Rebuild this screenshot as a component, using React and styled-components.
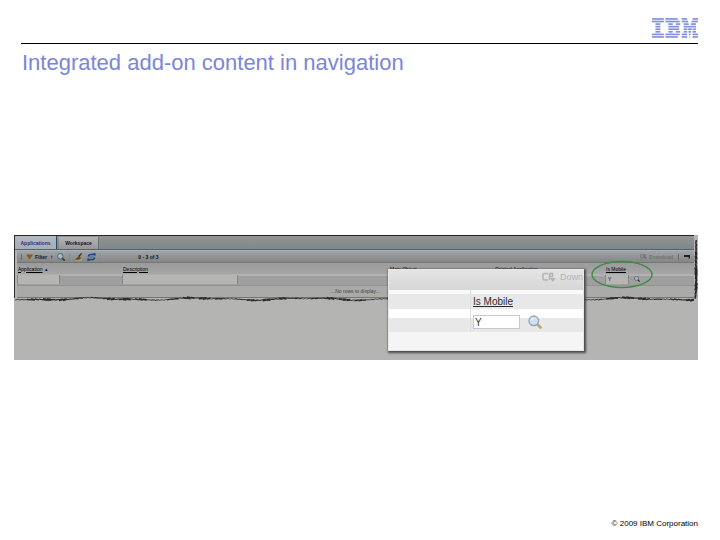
import styled, { createGlobalStyle, css } from "styled-components";

const theme = {
  primColor: "#7b86d6",
  ink: "#141414",
  paper: "#b4b4b3",
};

const GlobalStyle = createGlobalStyle`
  * {
    box-sizing: border-box;
  }
  body {
    margin: 0;
    background-color: #fff;
    font-family: "Liberation Sans", Arial, sans-serif;
  }
  button, input {
    font-family: inherit;
    margin: 0;
    border-radius: 0;
  }
`;

const Slide = styled.main`
  min-height: 100vh;
  display: flex;
  flex-direction: column;
  padding: 18px 22px 10px 14px;
`;

const Header = styled.header`
  margin-left: 7px;
  .brand {
    display: flex;
    justify-content: flex-end;
    height: 26px;
    padding-bottom: 6px;
    border-bottom: solid 1px #000;
  }
  h1 {
    margin: 6px 0 0 1px;
    font-size: 22px;
    line-height: 25px;
    font-weight: 400;
    color: ${theme.primColor};
  }
`;

const Figure = styled.section`
  position: relative;
  margin-top: 160px;
  padding-bottom: 62px;
  background-color: ${theme.paper};
`;

const Screen = styled.div`
  position: relative;
  border-top: solid 1px #242424;
  border-left: solid 1px #303030;
  margin-right: 4px;
`;

const TabBar = styled.nav`
  display: flex;
  align-items: flex-end;
  gap: 2px;
  height: 14px;
  background: linear-gradient(#92958f, #7e878c);
  border-bottom: solid 1px #53616e;
`;

const Tab = styled.button`
  height: 12px;
  width: 40px;
  padding: 0;
  border: none;
  font-size: 5px;
  line-height: 10px;
  font-weight: 700;
  color: #141414;
  background: linear-gradient(#b4b4b4, #969696);
  border-right: solid 1px #6b7075;
  ${({ $active }) =>
    $active &&
    css`
      height: 13px;
      width: 42px;
      color: #1e327e;
      background: linear-gradient(#b3b8be, #a6adb6);
      border-right-color: #2f4a66;
    `}
`;

const Toolbar = styled.div`
  display: flex;
  align-items: center;
  gap: 4px;
  height: 13px;
  padding: 0 4px;
  margin-left: 2px;
  border-top: solid 1px #a9b0b6;
  border-bottom: solid 1px #777;
  background: linear-gradient(#a0a5a8, #858585);
  font-size: 5px;
  color: ${theme.ink};
  .pager {
    margin-left: 33px;
    font-weight: 700;
  }
  .right {
    margin-left: auto;
    display: flex;
    align-items: center;
    gap: 5px;
  }
`;

const Tool = styled.button`
  display: flex;
  align-items: center;
  gap: 2px;
  padding: 0;
  border: none;
  background-color: transparent;
  font-size: 5px;
  font-weight: 700;
  color: ${({ $muted }) => ($muted ? "#727272" : theme.ink)};
`;

const Separator = styled.span`
  width: 1px;
  height: 6px;
  background-color: ${({ $faint }) => ($faint ? "#8c8c8c" : "#6a6a6a")};
`;

const Grid = styled.table`
  width: calc(100% - 2px);
  margin-left: 2px;
  table-layout: fixed;
  border-collapse: collapse;
  font-size: 5px;
  color: ${theme.ink};
  th,
  td {
    padding: 0 1px;
    text-align: left;
    vertical-align: middle;
    line-height: 10px;
  }
  th {
    height: 11px;
    font-weight: 400;
    color: #000;
    background: linear-gradient(#9a9a9a, #a6a6a6);
    span {
      text-decoration: underline;
    }
  }
  .filters td {
    height: 11px;
    padding: 0;
    background: linear-gradient(#b1b1b1 0 2px, #9f9f9f 2px);
    border-bottom: solid 1px #929292;
    div {
      display: flex;
      align-items: center;
      gap: 5px;
    }
  }
  .empty td {
    height: 12px;
    text-align: center;
    color: #4b4238;
    background-color: #aaaaa9;
    border-bottom: solid 1px #77776f;
  }
`;

const FilterInput = styled.input`
  display: block;
  width: ${({ $width }) => $width};
  height: 9px;
  padding: 0 2px;
  border: none;
  border-left: solid 1px #858585;
  border-right: solid 1px #858585;
  background-color: #b5b6b3;
  font-size: 5px;
  color: #000;
`;

const TornBottom = styled.svg`
  display: block;
  position: absolute;
  left: 0;
  bottom: -4px;
  width: 100%;
  height: 6px;
`;

const TornRight = styled.svg`
  position: absolute;
  right: -4px;
  top: 4px;
  width: 5px;
  height: calc(100% - 3px);
`;

const Highlight = styled.svg`
  position: absolute;
  right: 45px;
  top: 25px;
  width: 63px;
  height: 29px;
`;

const Zoomed = styled.aside`
  position: absolute;
  left: 374px;
  top: 34px;
  width: 196px;
  border: solid 1px #e6e6e6;
  background-color: #f5f5f5;
  box-shadow: 1px 1px 2px 1px #4a4a4a;
  color: #3c3c3c;
  font-size: 10px;
  .strip {
    display: flex;
    justify-content: flex-end;
    align-items: center;
    gap: 4px;
    height: 20px;
    padding-bottom: 6px;
    background: linear-gradient(#e4e4e4, #d6d6d6);
    overflow: hidden;
    font-size: 9px;
    color: #b4b4b4;
  }
  .cells {
    display: grid;
    grid-template-columns: 81px 1fr;
    padding-bottom: 18px;
  }
  .head,
  .value {
    display: flex;
    align-items: center;
    padding-left: 2px;
    border-left: solid 1px #dedede;
  }
  .head {
    height: 22px;
    text-decoration: underline;
    color: #2b2b2b;
    background: linear-gradient(#f9f9f9 0 4px, #e8e8e8 4px 19px, #fff 19px);
  }
  .value {
    height: 20px;
    gap: 8px;
    background: linear-gradient(#fff 0 6px, #e8e8e8 6px);
  }
  .blank {
    border-left-color: transparent;
  }
  input {
    width: 47px;
    height: 14px;
    padding: 0 1px;
    border: solid 1px #c8c8c8;
    background-color: #fff;
    font-size: 10px;
    color: #333;
  }
`;

const Lookup = styled.button`
  display: flex;
  padding: 0;
  border: none;
  background-color: transparent;
`;

const Footer = styled.footer`
  margin-top: auto;
  text-align: right;
  font-size: 8px;
  line-height: 12px;
  color: #000;
`;

// each row of the eight-bar logo, as [start, end] pairs
const bars = [
  [[0, 12], [13.5, 26], [30, 35.5], [41, 46.5]],
  [[0, 12], [13.5, 28], [30, 36.5], [40, 46.5]],
  [[3.5, 8.5], [16.5, 21], [24, 28.5], [32, 37.2], [39.2, 44.5]],
  [[3.5, 8.5], [16.5, 27.5], [32, 44.5]],
  [[3.5, 8.5], [16.5, 27.5], [32, 35.6], [36.2, 40.4], [41, 44.5]],
  [[3.5, 8.5], [16.5, 21], [24, 28.5], [32, 35.6], [36.8, 39.6], [41, 44.5]],
  [[0, 12], [13.5, 28], [30, 35.6], [37.4, 39], [41, 46.5]],
  [[0, 12], [13.5, 26], [30, 35.6], [37.9, 38.5], [41, 46.5]],
];

const Logo = () => (
  <svg width="46" height="20" viewBox="0 0 46.5 20" role="img" aria-label="IBM">
    {bars.map((row, y) =>
      row.map(([a, b]) => (
        <rect
          key={`${y}-${a}`}
          x={a}
          y={y * 2.6}
          width={b - a}
          height="1.7"
          fill="#8391dd"
        />
      ))
    )}
  </svg>
);

const Magnifier = ({ size, dark }) => (
  <svg width={size} height={size} viewBox="0 0 14 14">
    <path
      d="M9.4 9.4 L12.6 12.4"
      stroke={dark ? "#3c3428" : "#c4a873"}
      strokeWidth="2.8"
      strokeLinecap="round"
    />
    <circle
      cx="5.8"
      cy="5.8"
      r="4.8"
      fill={dark ? "#a5b5c4" : "#cfe0ee"}
      stroke={dark ? "#445264" : "#9aa5b1"}
      strokeWidth="1.4"
    />
    <path d="M3.4 5.4 Q4 3.4 6 3.2" stroke="#fff" fill="none" opacity="0.7" />
  </svg>
);

const DownloadIcon = ({ size, color }) => (
  <svg width={size} height={size} viewBox="0 0 14 14" fill="none" stroke={color}>
    <path d="M6 3.5 H2.5 Q1 3.5 1 5 V8.5 Q1 10 2.5 10 H6" strokeWidth="1.6" />
    <path d="M7.5 3 V10 M7.5 3.6 H10.5 V6.6 H7.5" strokeWidth="1.5" />
    <path d="M8 8 H13.6 L10.8 12 Z" fill={color} stroke="none" />
  </svg>
);

const columns = [
  { name: "Application", width: "105px", input: "43px" },
  { name: "Description", width: "auto", input: "116px" },
  { name: "Main Object", width: "105px" },
  { name: "Original Application", width: "111px" },
  { name: "Is Mobile", width: "89px", input: "24px", value: "Y" },
];

// ragged outline: the offset and weight of every bit of the tear
const tear = (length) => {
  const bits = [];
  for (let x = 1; x < length; x += 4) {
    const y = 3 + Math.sin(x / 17) * 0.9 + Math.sin(x * 1.7) * 0.9;
    const w = 0.7 + Math.abs(Math.sin(x / 23) * Math.cos(x / 5)) * 1.8;
    bits.push({ x, y, w, end: 3 + Math.sin((x + 4) / 17) * 0.9 });
  }
  return bits;
};

const App = () => {
  return (
    <>
      <GlobalStyle />
      <Slide>
        <Header>
          <div className="brand">
            <Logo />
          </div>
          <h1>Integrated add-on content in navigation</h1>
        </Header>

        <Figure>
          <Screen>
            <TabBar>
              <Tab $active>Applications</Tab>
              <Tab>Workspace</Tab>
            </TabBar>

            <Toolbar>
              <Separator />
              <Tool>
                <svg width="7" height="6" viewBox="0 0 7 6">
                  <path d="M0 0.5 H7 L3.5 5.5 Z" fill="#8a5a1c" />
                </svg>
                Filter
              </Tool>
              <Tool aria-label="More">
                <svg width="2" height="4" viewBox="0 0 2 4">
                  <path d="M0 0 L2 2 L0 4 Z" fill="#5c5c5c" />
                </svg>
              </Tool>
              <Tool aria-label="Search">
                <Magnifier size={8} dark />
              </Tool>
              <Separator $faint />
              <Tool aria-label="Clear">
                <svg width="9" height="8" viewBox="0 0 9 8">
                  <path d="M1 6.5 L5 3 L7 5 L5 7.2 H1 Z" fill="#6e4a2c" />
                  <path d="M4.6 3.4 L7.6 0.6" stroke="#3b3324" strokeWidth="1.4" />
                  <path d="M1 7.2 H8" stroke="#c2b46a" strokeWidth="0.8" />
                </svg>
              </Tool>
              <Tool aria-label="Refresh">
                <svg width="9" height="8" viewBox="0 0 9 8" fill="none">
                  <path
                    d="M1.4 3.6 Q1.5 1.2 4.5 1.4 H7 M7.6 4.4 Q7.5 6.8 4.5 6.6 H2"
                    stroke="#1f4688"
                    strokeWidth="1.5"
                  />
                  <path d="M6 0 L9 0.4 L8 3.4 Z M3 8 L0 7.6 L1 4.6 Z" fill="#1f4688" />
                  <path d="M2.4 4 H6.6" stroke="#2b5aa5" strokeWidth="0.8" />
                </svg>
              </Tool>
              <Separator $faint />
              <span className="pager">0 - 3 of 3</span>
              <div className="right">
                <Tool $muted>
                  <DownloadIcon size={7} color="#6c6c6c" />
                  Download
                </Tool>
                <Separator />
                <Tool aria-label="Collapse">
                  <svg width="6" height="4" viewBox="0 0 6 4">
                    <path d="M0 0 H6 V3.4 H4.6 V2 H0 Z" fill="#222" />
                  </svg>
                </Tool>
              </div>
            </Toolbar>

            <Grid>
              <colgroup>
                {columns.map((c) => (
                  <col key={c.name} width={c.width} />
                ))}
              </colgroup>
              <thead>
                <tr>
                  {columns.map((c, i) => (
                    <th key={c.name}>
                      <span>{c.name}</span>
                      {i === 0 ? " \u00a0▴" : ""}
                    </th>
                  ))}
                </tr>
              </thead>
              <tbody>
                <tr className="filters">
                  {columns.map((c) => (
                    <td key={c.name}>
                      {c.input ? (
                        <div>
                          <FilterInput
                            aria-label={c.name}
                            $width={c.input}
                            defaultValue={c.value}
                          />
                          {c.value ? (
                            <Lookup aria-label="Look up">
                              <Magnifier size={6} dark />
                            </Lookup>
                          ) : (
                            ""
                          )}
                        </div>
                      ) : (
                        ""
                      )}
                    </td>
                  ))}
                </tr>
                <tr className="empty">
                  <td colSpan={5}>...No rows to display...</td>
                </tr>
              </tbody>
            </Grid>

            <TornBottom viewBox="0 0 680 6" preserveAspectRatio="none">
              {tear(680).map((b) => (
                <path
                  key={b.x}
                  d={`M${b.x - 1} ${b.y} L${b.x + 3} ${b.end}`}
                  stroke="#2a2a28"
                  strokeWidth={b.w}
                />
              ))}
            </TornBottom>
            <TornRight viewBox="0 0 6 60" preserveAspectRatio="none">
              {tear(60).map((b) => (
                <path
                  key={b.x}
                  d={`M${b.y} ${b.x - 1} L${b.end} ${b.x + 3}`}
                  stroke="#242424"
                  strokeWidth={b.w + 1}
                />
              ))}
            </TornRight>
          </Screen>

          <Highlight viewBox="0 0 63 29">
            <ellipse
              cx="32"
              cy="14.5"
              rx="30"
              ry="13"
              fill="none"
              stroke="#3f8a45"
              strokeWidth="1.4"
            />
          </Highlight>

          <Zoomed>
            <div className="strip">
              <DownloadIcon size={14} color="#b4b4b4" />
              <span>Down</span>
            </div>
            <div className="cells">
              <div className="head blank" />
              <label className="head" htmlFor="isMobile">
                Is Mobile
              </label>
              <div className="value blank" />
              <div className="value">
                <input id="isMobile" defaultValue="Y" />
                <Lookup aria-label="Look up value">
                  <Magnifier size={14} />
                </Lookup>
              </div>
            </div>
          </Zoomed>
        </Figure>

        <Footer>© 2009 IBM Corporation</Footer>
      </Slide>
    </>
  );
};

export default App;
